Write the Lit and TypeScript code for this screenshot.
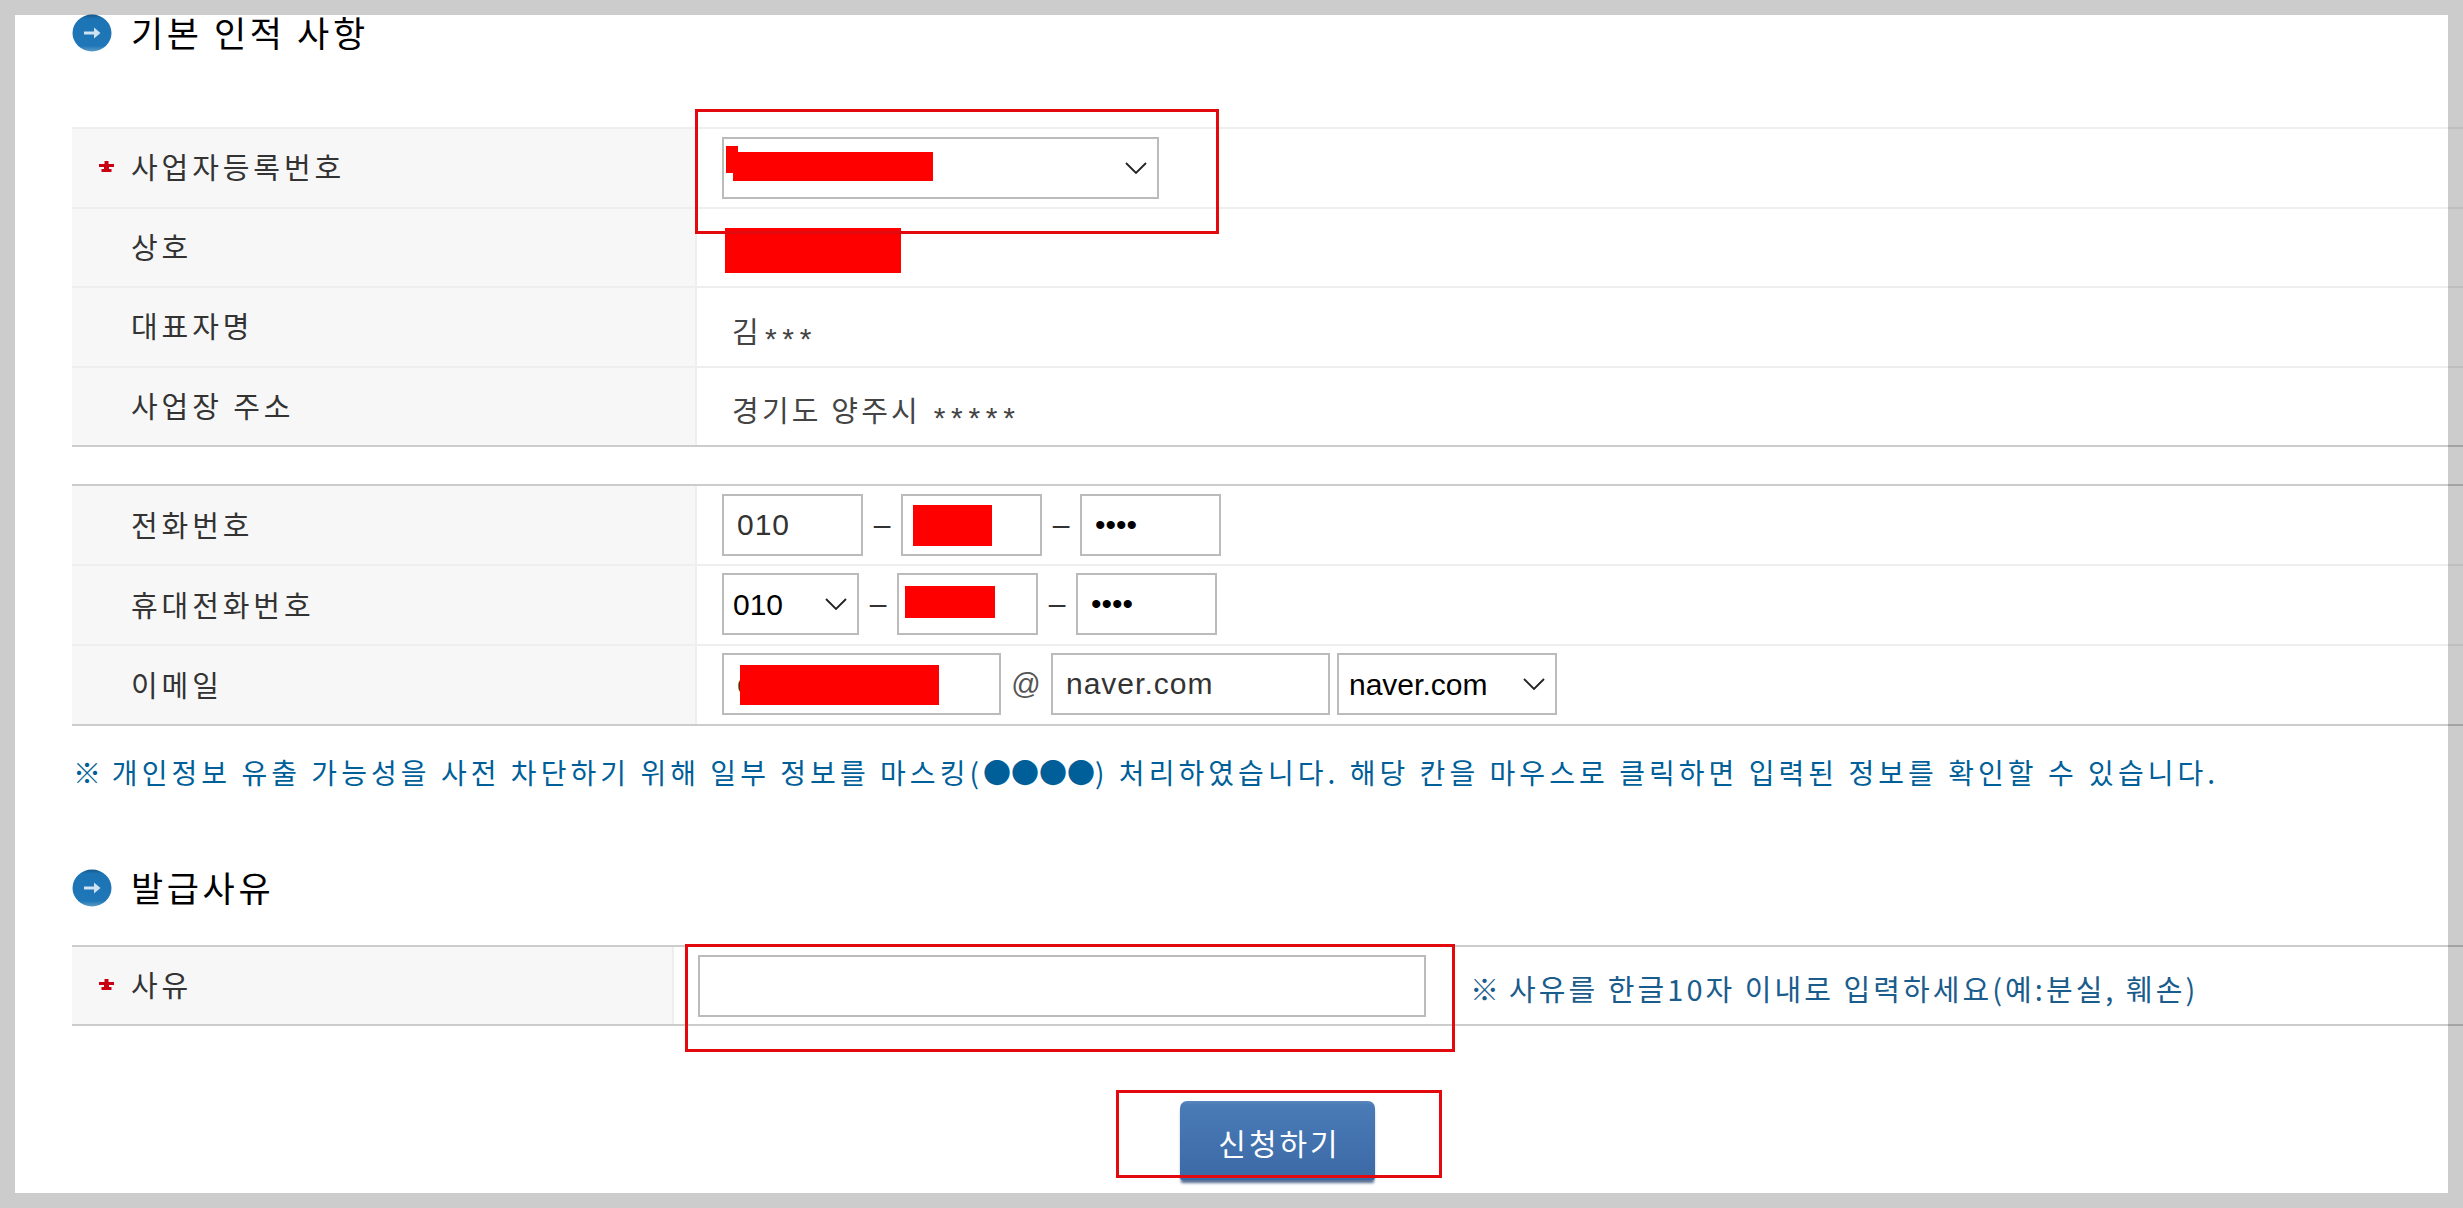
import { LitElement, html, css } from "lit";
import { customElement } from "lit/decorators.js";

const chevron = html`<svg class="chev" viewBox="0 0 22 12" aria-hidden="true"><path d="M1 1l10 10L21 1" fill="none" stroke="#222" stroke-width="1.8"/></svg>`;
const bullet = html`<svg class="bullet" viewBox="0 0 40 38" aria-hidden="true">
  <defs><linearGradient id="bg" x1="0" y1="0" x2="0" y2="1"><stop offset="0" stop-color="#14588c"/><stop offset=".12" stop-color="#1d74b4"/><stop offset=".85" stop-color="#1f77b8"/><stop offset="1" stop-color="#5c9cc8"/></linearGradient></defs>
  <ellipse cx="20" cy="19" rx="19.5" ry="18.5" fill="url(#bg)"/>
  <path d="M12 19h13" stroke="#cfe3f2" stroke-width="3" fill="none"/><path d="M22 13.5l6.5 5.5-6.5 5.5z" fill="#cfe3f2"/>
</svg>`;
const star = html`<svg class="star" viewBox="0 0 15 11" aria-hidden="true"><path d="M5.5 0h4v3H15v3H10v2h2.5v3h-10V8H5V6H0V3h5.5z" fill="#c8000f"/></svg>`;

@customElement("app-root")
export class AppRoot extends LitElement {
  static styles = css`
    :host { display: block; position: relative; width: 2463px; height: 1208px; overflow: hidden; background: #fff;
      font-family: "Noto Sans CJK KR", "Liberation Sans", sans-serif; color: #333; }
    .page { padding: 14px 0 0 72px; display: flex; flex-direction: column; }
    .heading { display: flex; align-items: center; gap: 19px; height: 38px; font-size: 35px; line-height: 36px; color: #000; letter-spacing: 3.6px; white-space: nowrap; }
    .heading span { padding-bottom: 2px; }
    .bullet { width: 40px; height: 38px; flex: none; }
    .basic { margin-top: 75px; --row: 77.5px; --top: #eee; }
    .contact { margin-top: 37px; --row: 78px; --top: #ccc; }
    .reason { margin-top: 38px; --row: 77px; --top: #ccc; --col: 602px; }
    .table { display: flex; flex-direction: column; border-top: 2px solid var(--top); border-bottom: 2px solid #ccc; }
    .row { display: grid; grid-template-columns: var(--col, 625px) 1fr; height: var(--row); }
    .row + .row { border-top: 2px solid #eee; }
    .label { display: flex; align-items: center; background: #f7f7f7; border-right: 2px solid #eee; padding: 0 0 3px 59px; font-size: 29px; letter-spacing: 3.9px; white-space: nowrap; }
    .label.req { padding-left: 27px; gap: 17px; }
    .star { width: 15px; height: 11px; flex: none; }
    .cell { display: flex; align-items: center; padding-left: 25px; min-width: 0; }
    .contact .row + .row .cell { padding-bottom: 2px; }
    .reason .cell { padding-left: 24px; }
    .value { margin-left: 10px; font-size: 29px; letter-spacing: 3.2px; color: #444; padding-top: 12px; white-space: nowrap; }
    .value.addr { padding-top: 10px; }
    .ast { font: 30px "Liberation Sans", sans-serif; letter-spacing: 5.7px; vertical-align: -6px; margin-left: 3px; }
    input, select { box-sizing: border-box; height: 62px; border: 2px solid #bbb; background: #fff; border-radius: 0; outline: none; margin: 0;
      font: 30px "Liberation Sans", sans-serif; color: #333; padding: 0 13px; appearance: none; -webkit-appearance: none; letter-spacing: 1px; }
    input[type="password"] { color: #000; letter-spacing: 0; }
    .sel { position: relative; display: block; flex: none; }
    .sel select { display: block; width: 100%; color: #000; padding: 0 10px; letter-spacing: 0; }
    .sel.short select { padding-left: 9px; }
    .chev { position: absolute; right: 12px; top: 25px; width: 22px; height: 12px; pointer-events: none; }
    .w141 { width: 141px; flex: none; }
    .sep { width: 38px; flex: none; text-align: center; font: 30px "Liberation Sans", sans-serif; color: #333; }
    .at { width: 50px; flex: none; text-align: center; font: 29px "Liberation Sans", sans-serif; color: #555; }
    .w279 { width: 279px; flex: none; }
    .note { margin: 28px 0 0 1px; font-size: 28px; line-height: 36px; color: #005f99; letter-spacing: 4.05px; white-space: nowrap; }
    .dots { letter-spacing: 0; }
    .ref { letter-spacing: .5px; }
    .section2 { margin-top: 79px; }
    .hint { margin-left: 44px; padding-top: 5px; font-size: 29px; color: #1a5c8c; letter-spacing: 3.05px; white-space: nowrap; }
    .actions { display: flex; justify-content: center; margin: 75px 0 0 -72px; padding-left: 92px; }
    button { width: 195px; height: 79px; border: 0; border-radius: 7px 7px 2px 2px; padding: 2px 0 0 4px; color: #fff; font: 30px "Noto Sans CJK KR", sans-serif; letter-spacing: 3px;
      background: linear-gradient(#5a87bd 0, #4a7bb7 5%, #3b69a6 100%); box-shadow: 0 4px 3px -1px rgba(40,70,115,.8); }
    .mark { position: absolute; background: #f00; }
    .anno { position: absolute; box-sizing: border-box; border: 3px solid #e20a0f; pointer-events: none; }
    .frame { position: absolute; inset: 0; box-sizing: border-box; border: 15px solid rgba(0,0,0,.2); pointer-events: none; }
  `;

  private box(x: number, y: number, w: number, h: number, cls: string) {
    return html`<div class=${cls} style="left:${x}px;top:${y}px;width:${w}px;height:${h}px"></div>`;
  }

  render() {
    return html`
      <div class="page">
        <div class="heading">${bullet}<span>기본 인적 사항</span></div>
        <div class="table basic">
          <div class="row"><div class="label req">${star}사업자등록번호</div>
            <div class="cell"><label class="sel" style="width:437px"><select aria-label="사업자등록번호"><option></option></select>${chevron}</label></div></div>
          <div class="row"><div class="label">상호</div><div class="cell"></div></div>
          <div class="row"><div class="label">대표자명</div><div class="cell"><div class="value">김<span class="ast">***</span></div></div></div>
          <div class="row"><div class="label">사업장 주소</div><div class="cell"><div class="value addr">경기도 양주시 <span class="ast">*****</span></div></div></div>
        </div>
        <div class="table contact">
          <div class="row"><div class="label">전화번호</div>
            <div class="cell"><input class="w141" value="010" aria-label="전화번호 1"/><span class="sep">–</span><input class="w141" aria-label="전화번호 2"/><span class="sep">–</span><input class="w141" type="password" value="0000" aria-label="전화번호 3"/></div></div>
          <div class="row"><div class="label">휴대전화번호</div>
            <div class="cell"><label class="sel short" style="width:137px"><select aria-label="휴대전화 앞자리"><option>010</option></select>${chevron}</label><span class="sep">–</span><input class="w141" aria-label="휴대전화 2"/><span class="sep">–</span><input class="w141" type="password" value="0000" aria-label="휴대전화 3"/></div></div>
          <div class="row"><div class="label">이메일</div>
            <div class="cell"><input class="w279" value="c" aria-label="이메일 아이디"/><span class="at">@</span><input class="w279" value="naver.com" aria-label="이메일 도메인"/><label class="sel" style="width:220px;margin-left:7px"><select aria-label="도메인 선택"><option>naver.com</option></select>${chevron}</label></div></div>
        </div>
        <div class="note"><span class="ref">※</span> 개인정보 유출 가능성을 사전 차단하기 위해 일부 정보를 마스킹(<span class="dots">●●●●</span>) 처리하였습니다. 해당 칸을 마우스로 클릭하면 입력된 정보를 확인할 수 있습니다.</div>
        <div class="heading section2">${bullet}<span>발급사유</span></div>
        <div class="table reason">
          <div class="row"><div class="label req">${star}사유</div>
            <div class="cell"><input style="width:728px;flex:none" aria-label="사유"/><span class="hint"><span class="ref">※</span> 사유를 한글10자 이내로 입력하세요(예:분실, 훼손)</span></div></div>
        </div>
        <div class="actions"><button>신청하기</button></div>
      </div>
      ${this.box(726, 146, 12, 27, "mark")}${this.box(733, 152, 200, 29, "mark")}
      ${this.box(725, 228, 176, 45, "mark")}
      ${this.box(913, 505, 79, 41, "mark")}${this.box(905, 586, 90, 32, "mark")}
      ${this.box(740, 665, 199, 40, "mark")}
      ${this.box(695, 109, 524, 125, "anno")}
      ${this.box(685, 944, 770, 108, "anno")}
      ${this.box(1116, 1090, 326, 88, "anno")}
      <div class="frame"></div>
    `;
  }
}
